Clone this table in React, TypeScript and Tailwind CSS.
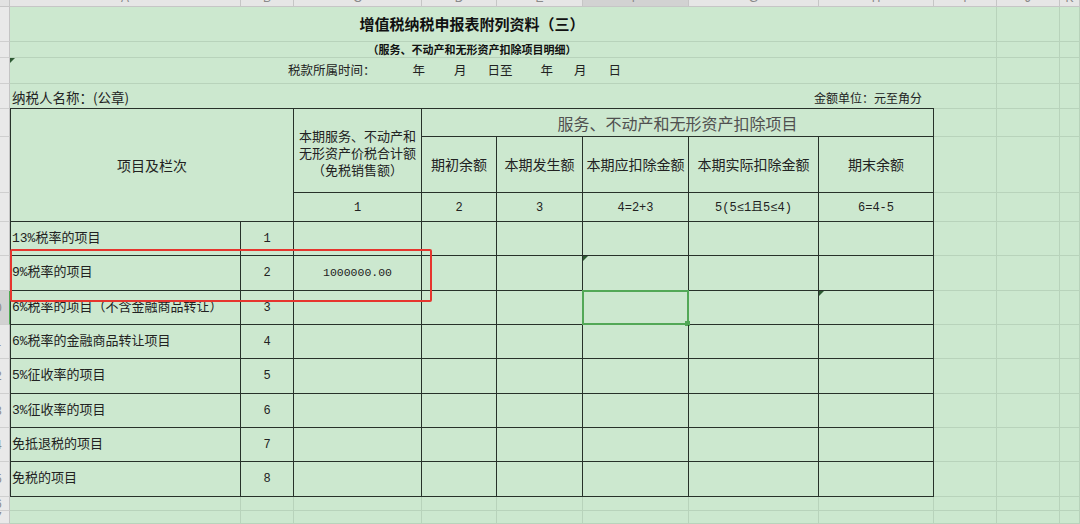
import React from "react";

const cols = ["A", "B", "C", "D", "E", "F", "G", "H", "I", "J", "K"];

const rows = [
  { label: "13%税率的项目", no: "1", amount: "" },
  { label: "9%税率的项目", no: "2", amount: "1000000.00" },
  { label: "6%税率的项目（不含金融商品转让）", no: "3", amount: "" },
  { label: "6%税率的金融商品转让项目", no: "4", amount: "" },
  { label: "5%征收率的项目", no: "5", amount: "" },
  { label: "3%征收率的项目", no: "6", amount: "" },
  { label: "免抵退税的项目", no: "7", amount: "" },
  { label: "免税的项目", no: "8", amount: "" },
];

const faint = "border-r border-b border-[#b8d3bb]";
const cell = "border-r border-b border-[#27312a]";
const mono = "font-['Liberation_Mono','Noto_Sans_CJK_SC',monospace]";

const RowHead = ({ n, active }: { n: number; active?: boolean }) => (
  <div
    className={`flex items-center justify-end overflow-hidden border-b border-[#cfcfcf] border-r ${
      active ? "bg-[#d2d2d2] border-r-[#4fa855]" : "bg-[#e9e9e9] border-r-[#c4c4c4]"
    }`}
  >
    <span className="w-[28px] shrink-0 text-center text-[12px] text-[#8a8a8a] font-['Liberation_Sans',sans-serif]">
      {n}
    </span>
  </div>
);

// small dark marker in the top-left corner of a cell
const Marker = () => (
  <span className="absolute left-0 top-0 h-0 w-0 border-t-[5px] border-r-[5px] border-t-[#2d5a33] border-r-transparent" />
);

const Faints = () => (
  <>
    <div className={faint} />
    <div className={faint} />
    <div className={faint} />
  </>
);

export default function App() {
  return (
    <div className="h-[524px] w-[1080px] overflow-hidden bg-[#cce8cf] text-[#222] font-['Noto_Sans_CJK_SC',sans-serif]">
      <div className="relative grid h-full grid-cols-[10px_231px_53px_128px_75px_86px_106px_130px_115px_63px_63px_1fr] grid-rows-[7px_35px_16px_26px_25px_28px_56px_29px_34px_35px_34px_34px_35px_34px_34px_35px_14px_13px]">
        {/* column letters */}
        <div className="border-r border-b border-[#c6c6c6] bg-[#e2e2e2]" />
        {cols.map((c) => (
          <div
            key={c}
            className={`flex items-end justify-center overflow-hidden border-r border-b border-[#c6c6c6] ${
              c === "F" ? "bg-[#d2d2d2]" : "bg-[#e6e6e6]"
            }`}
          >
            <span className="mb-[2px] text-[12px] leading-[12px] text-[#8a8a8a] font-['Liberation_Sans',sans-serif]">
              {c}
            </span>
          </div>
        ))}

        {/* title */}
        <RowHead n={1} />
        <div className="col-span-8 flex items-center justify-center border-b border-[#b8d3bb] text-[15px] font-bold text-[#111]">
          增值税纳税申报表附列资料（三）
        </div>
        <Faints />

        <RowHead n={2} />
        <div className="col-span-8 flex items-center justify-center border-b border-[#b8d3bb] text-[11px] font-bold leading-none text-[#111]">
          （服务、不动产和无形资产扣除项目明细）
        </div>
        <Faints />

        <RowHead n={3} />
        <div className="relative col-span-8 flex items-center border-b border-[#b8d3bb] pl-[278px] text-[12.5px]">
          <Marker />
          <span>税款所属时间：</span>
          <span className="ml-[37px]">年</span>
          <span className="ml-[29px]">月</span>
          <span className="ml-[21px]">日至</span>
          <span className="ml-[28px]">年</span>
          <span className="ml-[21px]">月</span>
          <span className="ml-[22px]">日</span>
        </div>
        <Faints />

        <RowHead n={4} />
        <div className="col-span-8 flex items-center justify-between border-b border-[#27312a] pt-[3px] pl-[2px] pr-[12px]">
          <span className="text-[13.5px]">纳税人名称：(公章)</span>
          <span className="text-[12px]">金额单位：元至角分</span>
        </div>
        <Faints />

        {/* table header */}
        <RowHead n={5} />
        <div className={`col-span-2 row-span-3 flex items-center justify-center border-l text-[14px] ${cell}`}>
          项目及栏次
        </div>
        <div className={`row-span-2 flex flex-col items-center justify-center pt-[3px] text-[13px] leading-[17px] ${cell}`}>
          <span>本期服务、不动产和</span>
          <span>无形资产价税合计额</span>
          <span>（免税销售额）</span>
        </div>
        <div className={`col-span-5 flex items-center justify-center text-[16px] text-[#505050] ${cell}`}>
          服务、不动产和无形资产扣除项目
        </div>
        <Faints />

        <RowHead n={6} />
        {["期初余额", "本期发生额", "本期应扣除金额", "本期实际扣除金额", "期末余额"].map((t) => (
          <div key={t} className={`flex items-center justify-center text-[14px] ${cell}`}>
            {t}
          </div>
        ))}
        <Faints />

        <RowHead n={7} />
        {["1", "2", "3", "4=2+3", "5(5≤1且5≤4)", "6=4-5"].map((t) => (
          <div key={t} className={`flex items-center justify-center pt-[2px] text-[12px] ${mono} ${cell}`}>
            {t}
          </div>
        ))}
        <Faints />

        {/* data rows */}
        {rows.map((r, i) => (
          <React.Fragment key={r.no}>
            <RowHead n={8 + i} active={i === 2} />
            <div className={`flex items-center overflow-hidden whitespace-nowrap border-l pl-[1px] text-[13px] ${mono} ${cell}`}>
              {r.label}
            </div>
            <div className={`flex items-center justify-center text-[12px] ${mono} ${cell}`}>{r.no}</div>
            <div className={`flex items-center justify-center text-[11.5px] ${mono} ${cell}`}>{r.amount}</div>
            <div className={cell} />
            <div className={cell} />
            <div className={`relative ${cell}`}>
              {i === 1 && <Marker />}
              {i === 2 && (
                <span className="absolute -left-px -top-px -right-px -bottom-px border-2 border-[#52a857]">
                  <span className="absolute -right-[3px] -bottom-[3px] h-[5px] w-[5px] bg-[#52a857]" />
                </span>
              )}
            </div>
            <div className={cell} />
            <div className={`relative ${cell}`}>{i === 2 && <Marker />}</div>
            <Faints />
          </React.Fragment>
        ))}

        {/* empty rows under the table */}
        {[16, 17].map((n) => (
          <React.Fragment key={n}>
            <RowHead n={n} />
            {cols.map((c) => (
              <div key={c} className={faint} />
            ))}
          </React.Fragment>
        ))}

        {/* red highlight drawn over the sheet */}
        <div className="pointer-events-none absolute left-[10px] top-[249px] h-[53px] w-[422px] rounded-[2px] border-2 border-[#e6352e]" />
      </div>
    </div>
  );
}
